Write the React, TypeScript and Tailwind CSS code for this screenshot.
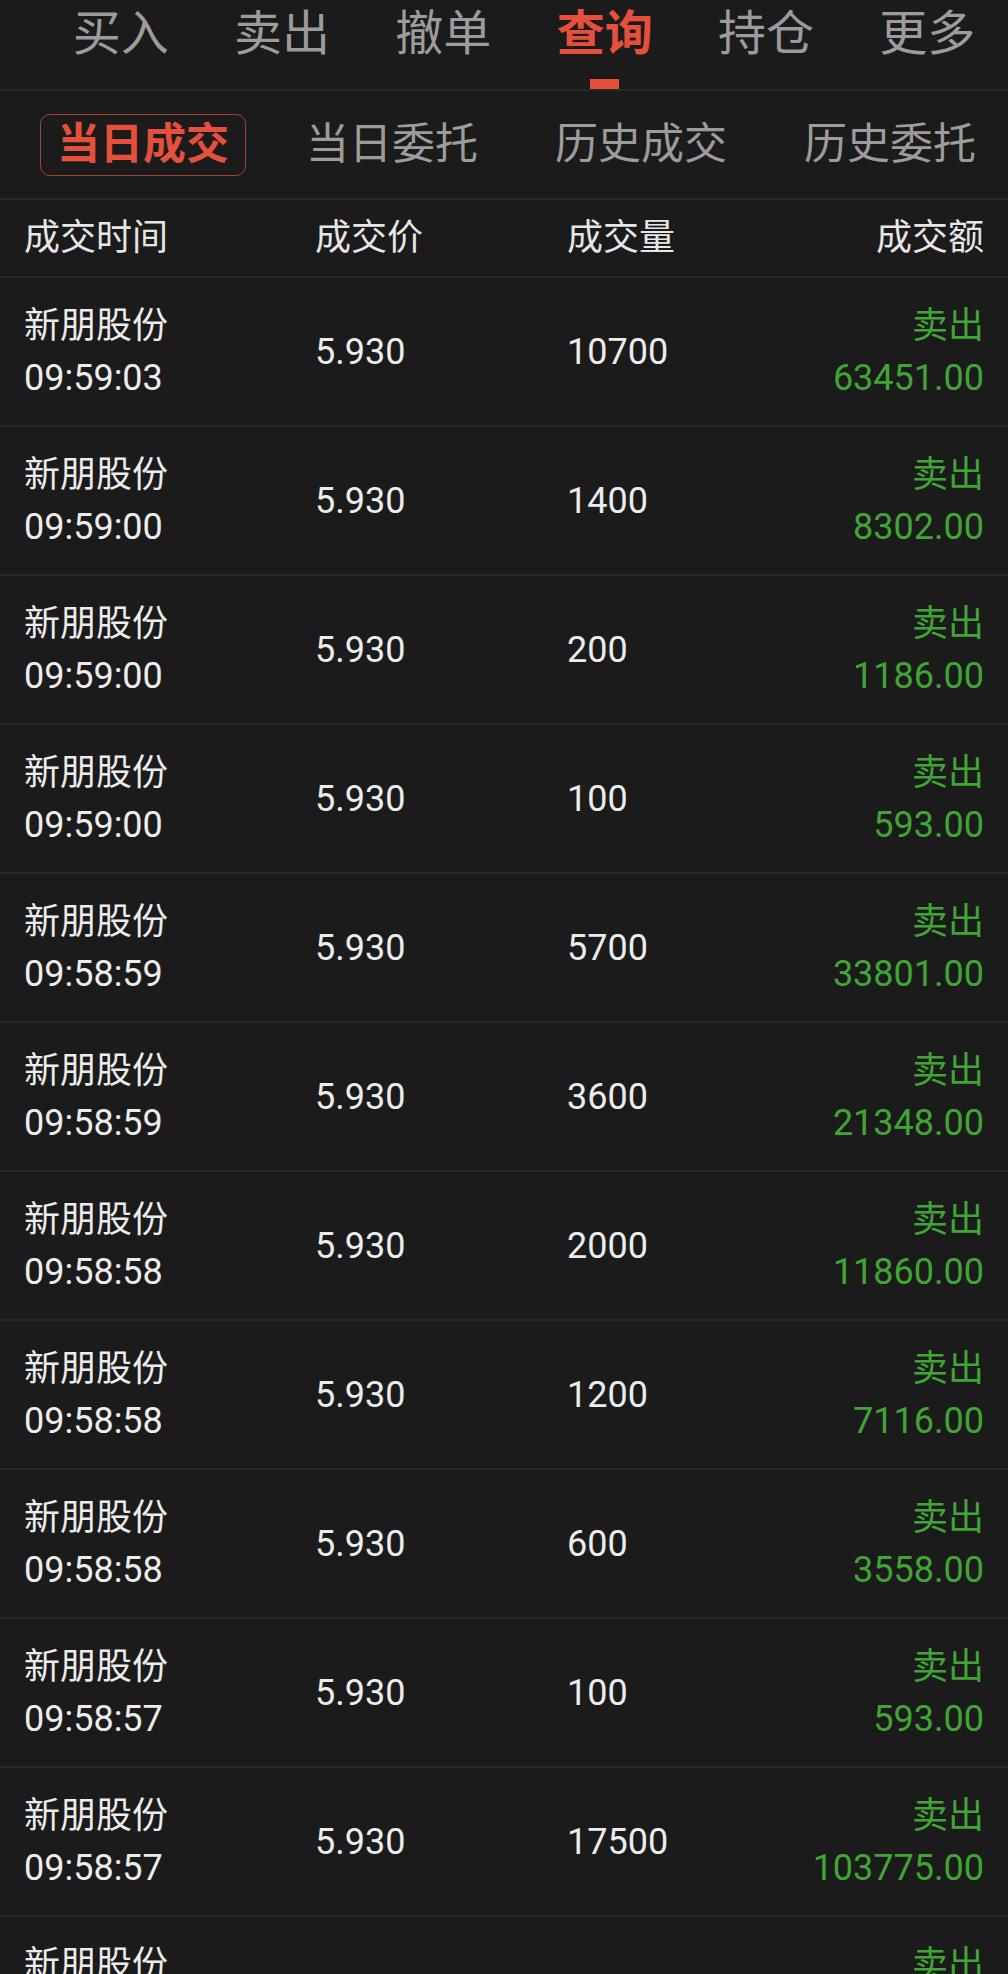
import React from 'react'

const topTabs = ['买入', '卖出', '撤单', '查询', '持仓', '更多']
const subTabs = ['当日成交', '当日委托', '历史成交', '历史委托']

const trades = [
  { time: '09:59:03', price: '5.930', qty: '10700', amount: '63451.00' },
  { time: '09:59:00', price: '5.930', qty: '1400', amount: '8302.00' },
  { time: '09:59:00', price: '5.930', qty: '200', amount: '1186.00' },
  { time: '09:59:00', price: '5.930', qty: '100', amount: '593.00' },
  { time: '09:58:59', price: '5.930', qty: '5700', amount: '33801.00' },
  { time: '09:58:59', price: '5.930', qty: '3600', amount: '21348.00' },
  { time: '09:58:58', price: '5.930', qty: '2000', amount: '11860.00' },
  { time: '09:58:58', price: '5.930', qty: '1200', amount: '7116.00' },
  { time: '09:58:58', price: '5.930', qty: '600', amount: '3558.00' },
  { time: '09:58:57', price: '5.930', qty: '100', amount: '593.00' },
  { time: '09:58:57', price: '5.930', qty: '17500', amount: '103775.00' },
  { time: '09:58:57', price: '5.930', qty: '800', amount: '4744.00' },
]

export default function App() {
  const active = 3

  return (
    <div className="w-[1008px] h-[1974px] overflow-hidden bg-[#1b1b1b] font-['Roboto','Noto_Sans_CJK_SC',sans-serif]">
      {/* top tabs */}
      <div className="h-[91px] pl-[40px] grid grid-cols-6 border-b-2 border-[#282828]">
        {topTabs.map((t, i) => (
          <div key={t} className="flex flex-col items-center pt-[10px]">
            <span
              className={
                i === active
                  ? 'text-[48px] leading-[48px] font-bold text-[#e4503b]'
                  : 'text-[48px] leading-[48px] text-[#9c9c9c]'
              }
            >
              {t}
            </span>
            {i === active && <div className="mt-auto w-[29px] h-[10px] bg-[#e4503b]" />}
          </div>
        ))}
      </div>

      {/* sub tabs */}
      <div className="h-[109px] pl-[40px] flex items-center gap-[43px] border-b-2 border-[#282828]">
        {subTabs.map((t, i) =>
          i === 0 ? (
            <div
              key={t}
              className="w-[206px] h-[62px] flex items-center justify-center rounded-[10px] border-[1.5px] border-[#a8412f] text-[43px] font-bold text-[#e4503b]"
            >
              {t}
            </div>
          ) : (
            <div key={t} className="w-[206px] h-[62px] flex items-center justify-center text-[43px] text-[#9c9c9c]">
              {t}
            </div>
          )
        )}
      </div>

      {/* header */}
      <div className="h-[78px] px-[24px] grid grid-cols-[291px_252px_1fr_auto] items-center border-b-2 border-[#282828] text-[36px] text-[#e6e6e6]">
        <span>成交时间</span>
        <span>成交价</span>
        <span>成交量</span>
        <span className="text-right">成交额</span>
      </div>

      {/* rows */}
      {trades.map((r, i) => (
        <div
          key={i}
          className="h-[149px] px-[24px] grid grid-cols-[291px_252px_1fr_auto] items-center border-b-2 border-[#282828] text-[36px] leading-[52px] text-[#ececec]"
        >
          <div className="flex flex-col">
            <span>新朋股份</span>
            <span>{r.time}</span>
          </div>
          <span>{r.price}</span>
          <span>{r.qty}</span>
          <div className="flex flex-col items-end text-[#40a534]">
            <span>卖出</span>
            <span>{r.amount}</span>
          </div>
        </div>
      ))}
    </div>
  )
}
